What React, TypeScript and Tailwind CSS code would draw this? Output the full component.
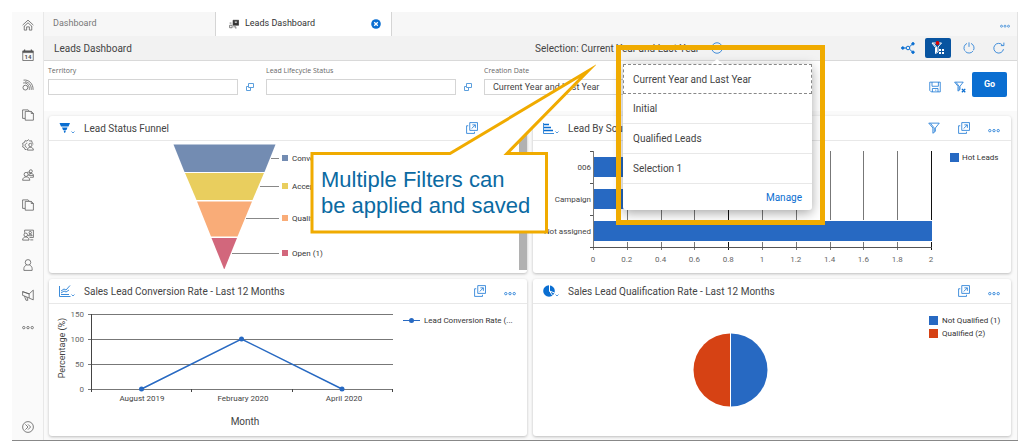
import React from 'react';

type IconProps = { className?: string };

const Svg = ({ children, className = '' }: { children: React.ReactNode; className?: string }) => (
  <svg
    viewBox="0 0 16 16"
    fill="none"
    stroke="currentColor"
    strokeWidth="1"
    aria-hidden="true"
    className={`size-3 shrink-0 ${className}`}
  >
    {children}
  </svg>
);

const HomeIcon = () => (
  <Svg>
    <path d="M.8 8.2 8 1.5l7.2 6.7M2.6 10 8 5l5.4 5M3 9.5v5.3h3.2v-4.3h3.6v4.3H13V9.5" />
  </Svg>
);

const CalendarIcon = () => (
  <Svg>
    <path d="M1 2.5h14v12.8H1zM1 4.8h14" />
    <path d="M1 3.5h14" strokeWidth="2" />
    <path d="M3.5.5v3M12.5.5v3" strokeWidth="1.6" />
    <text x="8" y="13" textAnchor="middle" fill="currentColor" stroke="none" fontSize="8" fontWeight="700">
      14
    </text>
  </Svg>
);

const FeedIcon = () => (
  <Svg>
    <circle cx="4.5" cy="11.5" r="3.2" />
    <path d="M1.5 5.3c5-1 9 3.4 8.2 9.2M2 1.5c7-1 13 4.5 12.8 13M4 3.8c5 .2 8.8 4.4 8.3 10.7" />
  </Svg>
);

const CopyIcon = () => (
  <Svg>
    <path d="M4 12.5H.8V1.2h7.4l1.6 1.9M4.3 3.2h8l2.9 2.7v9H4.3z" />
    <path d="M12.3 3.2V6h2.9" />
  </Svg>
);

const GearUserIcon = () => (
  <Svg>
    <path d="M6 14H4l-.8-2.3L.8 10.5l.6-2.3L.8 5.7l2.4-1L4 2.3l2.6.4L8.5 1l1.8 1.7 2.6-.3.5 2.6 1.8 1.6" />
    <circle cx="11.2" cy="8" r="2.2" />
    <path d="M7 14.8c0-5 8.2-5 8.2 0zM7 5.5C3.2 6 3.2 10.8 6.5 11.3" />
  </Svg>
);

const UsersIcon = () => (
  <Svg>
    <circle cx="5.5" cy="7.2" r="2.7" />
    <path d="M.8 15c0-6 9.6-6 9.6 0z" />
    <circle cx="11.8" cy="3" r="2" />
    <path d="M9 8.5c0-3.5 6.2-3.5 6.2 0zM7 4.5c2-1 4 0 4 2.4M10.4 11h4.8V8.5" />
  </Svg>
);

const UserCardIcon = () => (
  <Svg>
    <path d="M3.5 5V1.5h11.7v9.8H10" />
    <circle cx="5" cy="7.8" r="2.4" />
    <path d="M.8 14.8c0-5.6 8.6-5.6 8.6 0zM15 14.5h-4" />
    <circle cx="11" cy="4.8" r="1.6" />
    <path d="M8.5 9c.3-2.8 4.8-2.8 5 0z" />
  </Svg>
);

const UserIcon = () => (
  <Svg>
    <circle cx="8" cy="4.5" r="3.7" />
    <path d="M2.5 15.2v-2.4c0-2.6 1.8-4 3.6-4.8M13.5 15.2v-2.4c0-2.6-1.8-4-3.6-4.8M2.5 15.2h11" />
  </Svg>
);

const MegaphoneIcon = () => (
  <Svg>
    <path d="M.8 3.5v5l3 1L15 14.5v-13l-5.500 5zM9.500 6.500V12M3.300 9.500l2 5.500h2.600l-1.400-4" />
    <path d="m.8 3.500 8.700 3" />
  </Svg>
);

const DotsIcon = ({ className }: IconProps) => (
  <Svg className={className}>
    <circle cx="2.4" cy="11.5" r="1.6" />
    <circle cx="8" cy="11.5" r="1.6" />
    <circle cx="13.6" cy="11.5" r="1.6" />
  </Svg>
);

const ExpandRailIcon = () => (
  <Svg>
    <circle cx="8" cy="8" r="7.2" />
    <path d="m4.5 4.5 3.5 3.5-3.5 3.5M8 4.5 11.5 8 8 11.5" />
  </Svg>
);

const PopOutIcon = () => (
  <Svg>
    <path d="M5 .8h10.3v10.4H5zM3 5H.8v10.2h10.5V13" />
    <path d="M7.5 8.7 12.3 4M8.5 3.8h4v4" />
  </Svg>
);

const FunnelIcon = ({ className }: IconProps) => (
  <Svg className={className}>
    <path d="M1 1.5h14L9.8 8v4.5L6.5 15V8z" />
    <path d="m3.5 2 4.8 6v5" />
  </Svg>
);

const ValueHelpIcon = () => (
  <svg viewBox="0 0 10 10" fill="none" stroke="#5c9fdd" aria-hidden="true" className="size-[10px]">
    <path d="M3.5 1.5h5v4h-5zM3.5 4.5h-2v4h4v-3" />
  </svg>
);

const DashboardIcon = () => (
  <Svg className="size-[10px]">
    <path d="M6.5 2h9v8h-9z" fill="currentColor" />
    <path d="M9 3.5h4v3H9z" fill="#fff" />
    <path d="M1 6.5h3M1 10h4v4H1zM7 12.5h4v3" />
  </Svg>
);

const CloseIcon = () => (
  <svg viewBox="0 0 10 10" aria-hidden="true" className="size-[10px]">
    <circle cx="5" cy="5" r="4.8" fill="#0a6ed1" />
    <path d="m3.2 3.2 3.6 3.6M6.8 3.2 3.2 6.8" stroke="#fff" strokeWidth="1.3" />
  </svg>
);

const ShareIcon = () => (
  <svg viewBox="0 0 14 12" fill="none" stroke="currentColor" aria-hidden="true" className="h-3 w-[14px]">
    <circle cx="1.8" cy="6" r="1.2" fill="currentColor" />
    <circle cx="7" cy="6" r="1.8" />
    <circle cx="12" cy="1.8" r="1.2" fill="currentColor" />
    <circle cx="12" cy="10.2" r="1.2" fill="currentColor" />
    <path d="M3 6h2M8.5 4.8 11 2.5M8.5 7.2 11 9.5" />
  </svg>
);

const FilterGridIcon = () => (
  <svg viewBox="0 0 14 14" fill="none" stroke="#fff" aria-hidden="true" className="size-[14px]">
    <path d="M1 2h9.5L7 6v5L4.5 12.5V6.5zM2.5 2.5 5.5 6v5" />
    <circle cx="6.5" cy="2" r="1.9" fill="#d00" stroke="none" />
    <path d="M8 8h2v2H8zM11 8h2v2h-2zM8 11h2v2H8zM11 11h2v2h-2z" fill="#fff" stroke="none" />
  </svg>
);

const PowerIcon = () => (
  <Svg>
    <path d="M8 .5v6M5.3 1.9a6.7 6.7 0 1 0 5.4 0" strokeDasharray="11 1.5" />
  </Svg>
);

const RefreshIcon = () => (
  <Svg>
    <path d="M14 9.5A6.5 6.5 0 1 1 12.5 4M14.5.8v4h-4" />
  </Svg>
);

const SaveIcon = () => (
  <Svg>
    <path d="M1 1.5h14v13H3l-2-2zM4 1.5V7h8.5V1.5M4.5 14.5V10H12v4.5M9 11.5V13" />
  </Svg>
);

const ClearFilterIcon = () => (
  <Svg>
    <path d="M.8 1.5h11.5L8 7v4.5l-2.7 2V7zM3 2l3.8 5v5" />
    <path d="m10.5 10.5 4.5 4.5M15 10.5 10.5 15" strokeWidth="1.8" />
  </Svg>
);

// Chart type pickers carry a small chevron at their lower right corner.
const TypeIcon = ({ children }: { children: React.ReactNode }) => (
  <svg viewBox="0 0 18 12" fill="none" stroke="#0a6ed1" aria-hidden="true" className="h-3 w-[18px]">
    {children}
    <path d="m12.5 9.5 1.5 1.5 1.5-1.5" strokeWidth=".7" />
  </svg>
);

const funnelType = (
  <TypeIcon>
    <path d="M.5 1H11L9.500 4.500H2zM3 5.500h5.500L7.500 8H4zM4.500 8.500H7L6 11h-.5z" fill="#0a6ed1" stroke="none" />
  </TypeIcon>
);

const barType = (
  <TypeIcon>
    <path d="M.5 1v10.5H11" strokeWidth=".8" />
    <path d="M1 2.5h5M1 5.5h7M1 8.5h9" strokeWidth="1.5" />
  </TypeIcon>
);

const lineType = (
  <TypeIcon>
    <path d="M.5 1v10.5h11M2 6l3-2 2 1 4-4.5M2 8l3-2 2 1 3-2M2 9.5h8" strokeWidth=".8" />
  </TypeIcon>
);

const pieType = (
  <TypeIcon>
    <circle cx="6" cy="6" r="5.8" fill="#0a6ed1" stroke="none" />
    <path d="M6.5 0v6l5 2M6.5 6l3 4.5" stroke="#fff" />
  </TypeIcon>
);

const navItems = [
  { label: 'Home', icon: <HomeIcon /> },
  { label: 'Calendar', icon: <CalendarIcon /> },
  { label: 'Feed', icon: <FeedIcon /> },
  { label: 'Library', icon: <CopyIcon /> },
  { label: 'Service', icon: <GearUserIcon /> },
  { label: 'Customers', icon: <UsersIcon /> },
  { label: 'Documents', icon: <CopyIcon /> },
  { label: 'Contacts', icon: <UserCardIcon /> },
  { label: 'People', icon: <UserIcon /> },
  { label: 'Marketing', icon: <MegaphoneIcon /> },
  { label: 'More', icon: <DotsIcon /> },
];

const SideNav = () => (
  <nav className="flex w-8 shrink-0 flex-col items-center gap-[18px] border-r border-[#e8e8e8] bg-[#fafafa] pt-[7px] pb-[7px] text-[#555]">
    {navItems.map((item) => (
      <button key={item.label} aria-label={item.label}>
        {item.icon}
      </button>
    ))}
    <button aria-label="Expand navigation" className="mt-auto">
      <ExpandRailIcon />
    </button>
  </nav>
);

const TabBar = () => (
  <div className="flex h-6 items-stretch bg-[#f7f7f7] text-[9px]">
    <button className="w-[172px] border-r border-[#d5d5d5] pl-[9px] text-left text-[#777]">Dashboard</button>
    <div className="flex w-[176px] items-center border-r border-[#d5d5d5] bg-white pr-[10px] pl-[13px] text-[#333]">
      <button className="flex items-center gap-[6px]">
        <DashboardIcon />
        Leads Dashboard
      </button>
      <button aria-label="Close tab" className="ml-auto">
        <CloseIcon />
      </button>
    </div>
    <button aria-label="More tabs" className="mr-[7px] ml-auto text-[#0a6ed1]">
      <DotsIcon className="size-[10px]" />
    </button>
  </div>
);

const selections = ['Current Year and Last Year', 'Initial', 'Qualified Leads', 'Selection 1'];

const SelectionMenu = () => (
  <div className="absolute top-7 left-[93px] w-[189px] rounded-[3px] bg-white text-[10px] text-[#444] shadow-[0_3px_12px_rgba(0,0,0,0.35)]">
    <svg viewBox="0 0 12 5" aria-hidden="true" className="absolute -top-[5px] left-[88px] h-[5px] w-3">
      <path d="M0 5 6 0l6 5z" fill="#fff" />
    </svg>
    <ul>
      {selections.map((name, i) => (
        <li key={name}>
          <button
            className={`block h-[30px] w-full text-left ${
              i === 0 ? 'border border-dashed border-[#888] pl-[9px]' : 'border-b border-[#e8e8e8] pl-[10px]'
            }`}
          >
            {name}
          </button>
        </li>
      ))}
    </ul>
    <div className="flex h-[26px] items-center justify-end pr-[10px]">
      <button className="text-[#0a6ed1]">Manage</button>
    </div>
  </div>
);

const Callout = () => (
  <div className="absolute top-7 -left-[222px] h-[172px] w-[288px]">
    <svg viewBox="0 0 288 172" fill="none" aria-hidden="true" className="absolute inset-0 h-full w-full">
      <path
        d="M4 89.5h138L280 7l-81 82.500h39.500V168H4z"
        fill="#fff"
        stroke="#f0ab00"
        strokeWidth="3"
        strokeMiterlimit="10"
      />
    </svg>
    <p className="relative pt-[103px] pl-[13px] font-[family-name:'Liberation_Sans',sans-serif] text-[22px] leading-[26px] whitespace-nowrap text-[#0b6aa2]">
      Multiple Filters can
      <br />
      be applied and saved
    </p>
  </div>
);

const TitleBar = () => (
  <header className="relative z-10 grid h-[25px] grid-cols-[1fr_487px] items-center border-b border-[#d9d9d9] bg-[#f2f2f2] text-[10px] text-[#444]">
    <h1 className="pl-[10px]">Leads Dashboard</h1>
    <div className="relative flex h-6 items-center pr-2 pl-[5px]">
      <span>Selection: Current Year and Last Year</span>
      <button aria-label="Selection details" className="ml-3 text-[#0a6ed1]">
        <Svg>
          <circle cx="8" cy="8" r="7" />
          <path d="m5 7 3 3 3-3" />
        </Svg>
      </button>
      <div className="ml-auto flex items-center text-[#0a6ed1]">
        <button aria-label="Share" className="mr-[10px]">
          <ShareIcon />
        </button>
        <button
          aria-label="Filters"
          className="mr-3 flex h-5 w-[26px] items-center justify-center rounded-[2px] bg-[#0854a0]"
        >
          <FilterGridIcon />
        </button>
        <button aria-label="Power" className="mr-[18px]">
          <PowerIcon />
        </button>
        <button aria-label="Refresh" className="mr-1">
          <RefreshIcon />
        </button>
      </div>
      <Callout />
      <SelectionMenu />
      <div className="pointer-events-none absolute top-[9px] left-[86px] h-[180px] w-[209px] border-5 border-[#f0ab00]" />
    </div>
  </header>
);

const fields = [
  { id: 'territory', label: 'Territory', value: '' },
  { id: 'status', label: 'Lead Lifecycle Status', value: '' },
  { id: 'created', label: 'Creation Date', value: 'Current Year and Last Year' },
];

const FilterBar = () => (
  <form className="flex h-[50px] items-start bg-white pr-[10px] pl-1">
    {fields.map((field) => (
      <div key={field.id} className="mr-[11px] w-[207px]">
        <label
          htmlFor={field.id}
          className="block pt-[2px] font-[family-name:'Open_Sans',sans-serif] text-[7px] leading-4 text-[#666]"
        >
          {field.label}
        </label>
        <div className="flex items-center gap-[7px]">
          <input
            id={field.id}
            defaultValue={field.value}
            className="h-4 w-[190px] border border-[#d5d5d5] bg-white px-2 text-[9px] text-[#444]"
          />
          <button type="button" aria-label={`Choose ${field.label}`}>
            <ValueHelpIcon />
          </button>
        </div>
      </div>
    ))}
    <div className="mt-[11px] ml-auto flex items-center text-[#0a6ed1]">
      <button type="button" aria-label="Save selection" className="mt-1 mr-[13px]">
        <SaveIcon />
      </button>
      <button type="button" aria-label="Clear filters" className="mt-1 mr-[6px]">
        <ClearFilterIcon />
      </button>
      <button
        type="button"
        className="h-[25px] w-[35px] rounded-[2px] bg-[#0a6ed1] text-[9px] font-bold text-white"
      >
        Go
      </button>
    </div>
  </form>
);

type CardProps = {
  title: string;
  type: React.ReactNode;
  filter?: boolean;
  scroll?: boolean;
  children: React.ReactNode;
};

const Card = ({ title, type, filter, scroll, children }: CardProps) => (
  <section className="flex overflow-hidden rounded-[3px] bg-white shadow-[0_1px_3px_rgba(0,0,0,0.25)]">
    <div className="min-w-0 flex-1">
      <div className="flex h-[25px] items-center border-b border-[#e8e8e8] pr-[11px] pl-[10px] text-[#0a6ed1]">
        <button aria-label="Chart type" className="mr-[7px]">
          {type}
        </button>
        <h2 className="text-[10px] text-[#444]">{title}</h2>
        <div className="ml-auto flex items-center gap-[18px]">
          {filter && (
            <button aria-label="Filter">
              <FunnelIcon />
            </button>
          )}
          <button aria-label="Open">
            <PopOutIcon />
          </button>
          <button aria-label="More">
            <DotsIcon />
          </button>
        </div>
      </div>
      {children}
    </div>
    {scroll && <div className="mb-[3px] w-2 bg-[#b1b1b1]" />}
  </section>
);

const funnelSteps = [
  { name: 'Converted', color: '#738cb2', points: '124.5,3.5 226.5,3.5 215.5,31 135.5,31', y: 17, x: 222 },
  { name: 'Accepted', color: '#e9ce5e', points: '136,32 215,32 203.5,59 147.5,59', y: 45, x: 211 },
  { name: 'Qualified', color: '#f9ac78', points: '148,60.5 203,60.5 188.5,95.5 162,95.5', y: 77, x: 197 },
  { name: 'Open (1)', color: '#d2677c', points: '162.5,97 188,97 175.5,128 175,128', y: 112, x: 183 },
];

const FunnelChart = () => (
  <svg viewBox="0 0 470 132" className="block h-[132px] w-[470px] max-w-full" fontSize="8">
    {funnelSteps.map((s) => (
      <g key={s.name}>
        <polygon points={s.points} fill={s.color} />
        <path d={`M${s.x} ${s.y + 0.5}H230`} stroke="#888" />
        <rect x="233" y={s.y - 3} width="6" height="6" fill={s.color} />
        <text x="243" y={s.y + 3} fill="#333">
          {s.name}
        </text>
      </g>
    ))}
  </svg>
);

const bars = [
  { name: '006', value: 1, y: 16 },
  { name: 'Campaign', value: 1, y: 48 },
  { name: 'Not assigned', value: 2, y: 80 },
];
const barTicks = ['0', '0.2', '0.4', '0.6', '0.8', '1', '1.2', '1.4', '1.6', '1.8', '2'];

const BarChart = () => (
  <svg viewBox="0 0 478 132" className="block h-[132px] w-[478px] max-w-full" fontSize="8">
    {barTicks.map((t, i) => (
      <g key={t}>
        <path d={`M${Math.round(60 + i * 33.8) + 0.5} 10v99`} stroke={i === 4 || i === 10 ? '#111' : '#777'} />
        <text x={60 + i * 33.8} y="121" textAnchor="middle" fill="#666">
          {t}
        </text>
      </g>
    ))}
    <path d="M57 10.5h3M57 42.5h3M57 74.5h3M57 106.5h342" stroke="#555" />
    {bars.map((b) => (
      <g key={b.name}>
        <rect x="61" y={b.y - 1} width={b.value * 169 + 1} height="22" fill="#fff" />
        <rect x="61" y={b.y} width={b.value * 169} height="20" fill="#2769c2" />
        <text x="58" y={b.y + 13} textAnchor="end" fill="#444">
          {b.name}
        </text>
      </g>
    ))}
    <rect x="417" y="12" width="9" height="9" fill="#2769c2" />
    <text x="429" y="19" fill="#333">
      Hot Leads
    </text>
  </svg>
);

const months = ['August 2019', 'February 2020', 'April 2020'];

const LineChart = () => (
  <svg viewBox="0 0 478 132" className="block h-[132px] w-[478px] max-w-full" fontSize="8">
    {['150', '100', '50', '0'].map((t, i) => (
      <g key={t}>
        <path d={`M39 ${10.5 + i * 25}h305`} stroke="#777" />
        <text x="35" y={13 + i * 25} textAnchor="end" fill="#666">
          {t}
        </text>
      </g>
    ))}
    <path d="M42.5 10v78M142.5 85v3M243.5 85v3M343.5 85v3" stroke="#444" />
    {months.map((m, i) => (
      <text key={m} x={93 + i * 101} y="97" textAnchor="middle" fill="#444">
        {m}
      </text>
    ))}
    <text x="196" y="121" textAnchor="middle" fill="#444" fontSize="10">
      Month
    </text>
    <text transform="translate(16 44) rotate(-90)" textAnchor="middle" fill="#444" fontSize="9">
      Percentage (%)
    </text>
    <path d="M92.5 85 192.5 35 293 85" fill="none" stroke="#2769c2" strokeWidth="1.5" />
    <g fill="#2769c2">
      <circle cx="92.5" cy="85" r="2.5" />
      <circle cx="192.5" cy="35" r="2.5" />
      <circle cx="293" cy="85" r="2.5" />
      <circle cx="362.5" cy="16.5" r="2.5" />
      <path d="M354 16h17v1h-17z" />
    </g>
    <text x="375" y="19" fill="#333">
      Lead Conversion Rate (...
    </text>
  </svg>
);

const PieChart = () => (
  <svg viewBox="0 0 478 132" className="block h-[132px] w-[478px] max-w-full" fontSize="8">
    <path d="M198 29.5a36.5 36.5 0 0 1 0 73z" fill="#2769c2" />
    <path d="M197 29.5a36.5 36.5 0 0 0 0 73z" fill="#d64214" />
    <rect x="396" y="12" width="9" height="9" fill="#2769c2" />
    <rect x="396" y="25" width="9" height="9" fill="#d64214" />
    <text x="409" y="19" fill="#333">
      Not Qualified (1)
    </text>
    <text x="409" y="32" fill="#333">
      Qualified (2)
    </text>
  </svg>
);

const App = () => {
  return (
    <div className="bg-white pt-3 pr-[6px] pb-1 pl-3 font-[family-name:Roboto,sans-serif]">
      <div className="flex border-b border-[#888]">
        <SideNav />
        <main className="min-w-0 flex-1 border-r border-[#e2e2e2] bg-[#fafafa]">
          <TabBar />
          <TitleBar />
          <FilterBar />
          <div className="grid grid-cols-2 gap-[6px] pt-[5px] pr-[6px] pb-1 pl-[5px]">
            <Card title="Lead Status Funnel" type={funnelType} scroll>
              <FunnelChart />
            </Card>
            <Card title="Lead By Source" type={barType} filter>
              <BarChart />
            </Card>
            <Card title="Sales Lead Conversion Rate - Last 12 Months" type={lineType}>
              <LineChart />
            </Card>
            <Card title="Sales Lead Qualification Rate - Last 12 Months" type={pieType}>
              <PieChart />
            </Card>
          </div>
        </main>
      </div>
    </div>
  );
};

export default App;
